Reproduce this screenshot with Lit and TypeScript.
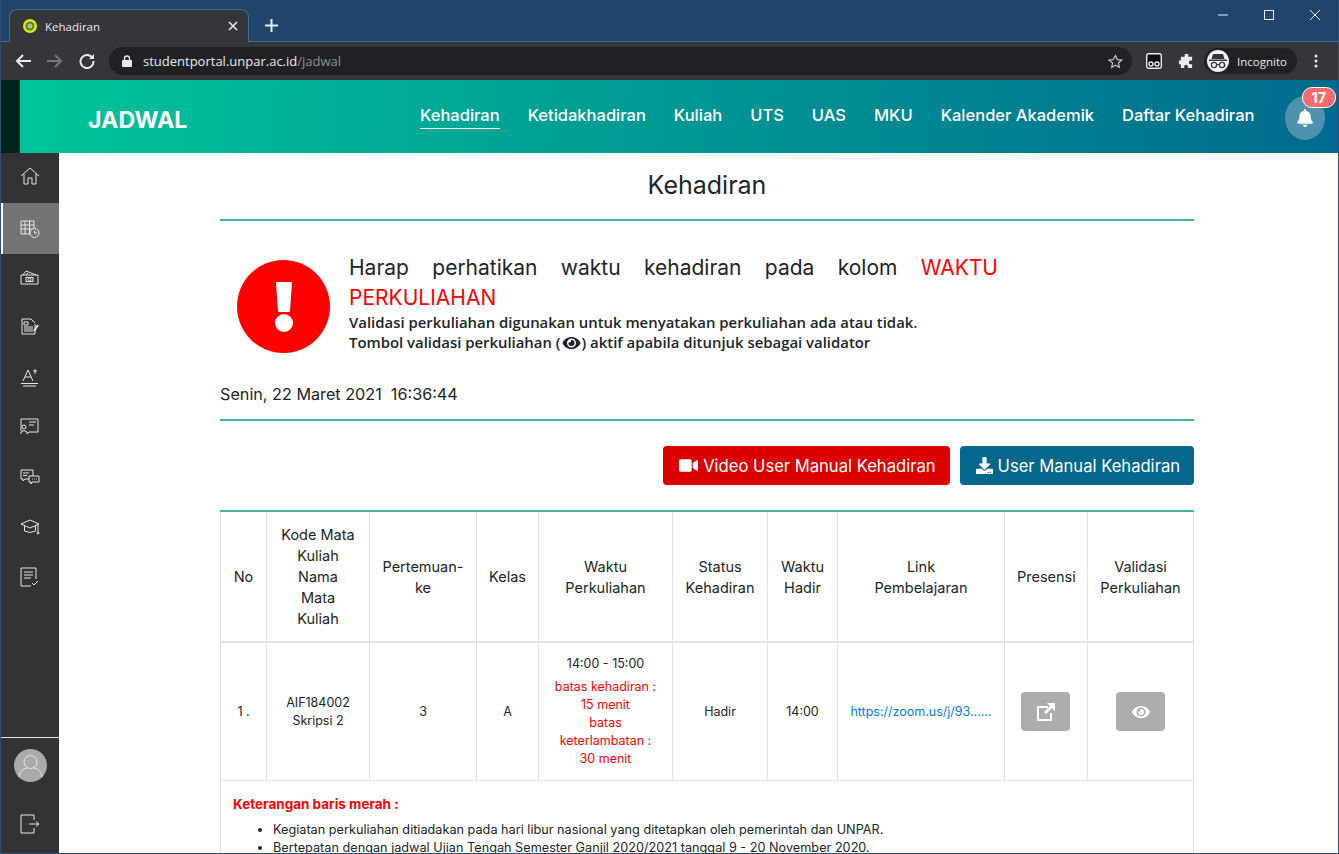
import { LitElement, css, html, svg } from "lit";
import { customElement } from "lit/decorators.js";

const NAV = ["Kehadiran", "Ketidakhadiran", "Kuliah", "UTS", "UAS", "MKU", "Kalender Akademik", "Daftar Kehadiran"];

const EYE = "M572.52 241.4C518.29 135.59 410.93 64 288 64S57.68 135.64 3.48 241.41a32.35 32.35 0 0 0 0 29.19C57.71 376.41 165.07 448 288 448s230.32-71.64 284.52-177.41a32.35 32.35 0 0 0 0-29.19zM288 400a144 144 0 1 1 144-144 143.93 143.93 0 0 1-144 144zm0-240a95.31 95.31 0 0 0-25.31 3.79 47.85 47.85 0 0 1-66.9 66.9A95.78 95.78 0 1 0 288 160z";
const BELL = "M224 512c35.32 0 63.97-28.65 63.97-64H160.03c0 35.35 28.65 64 63.97 64zm215.39-149.71c-19.32-20.76-55.47-51.99-55.47-154.29 0-77.7-54.48-139.9-127.94-155.16V32c0-17.67-14.32-32-31.98-32s-31.98 14.33-31.98 32v20.84C118.56 68.1 64.08 130.3 64.08 208c0 102.3-36.15 133.53-55.47 154.29-6 6.45-8.66 14.16-8.61 21.71.11 16.4 12.98 32 32.1 32h383.8c19.12 0 32-15.6 32.1-32 .05-7.55-2.61-15.27-8.61-21.71z";
const VIDEO = "M336.2 64H47.8C21.4 64 0 85.4 0 111.8v288.4C0 426.6 21.4 448 47.8 448h288.4c26.4 0 47.8-21.4 47.8-47.8V111.8c0-26.4-21.4-47.8-47.8-47.8zm189.4 37.7L416 177.3v157.4l109.6 75.5c21.2 14.6 50.4-.3 50.4-25.8V127.5c0-25.4-29.1-40.4-50.4-25.8z";
const DOWNLOAD = "M216 0h80c13.3 0 24 10.7 24 24v168h87.7c17.8 0 26.7 21.5 14.1 34.1L269.7 378.3c-7.5 7.5-19.8 7.5-27.3 0L90.1 226.1c-12.6-12.6-3.7-34.1 14.1-34.1H192V24c0-13.3 10.7-24 24-24zm296 376v112c0 13.3-10.7 24-24 24H24c-13.3 0-24-10.7-24-24V376c0-13.3 10.7-24 24-24h146.7l49 49c20.1 20.1 52.5 20.1 72.6 0l49-49H488c13.3 0 24 10.7 24 24zm-124 88c0-11-9-20-20-20s-20 9-20 20 9 20 20 20 20-9 20-20zm64 0c0-11-9-20-20-20s-20 9-20 20 9 20 20 20 20-9 20-20z";

// sidebar icons, 20x20 outlines
const SIDE = [
  svg`<path d="M1 10 10 2l9 8M4 8v10h4v-6h4v6h4V8"/>`,
  svg`<path d="M1 2h13v13H1zM1 6h13M1 10h13M5 2v13M9.500 2v13"/><circle cx="14.500" cy="14" r="4.500" fill="#737373"/><path d="M14.500 11.500V14h2.500"/>`,
  svg`<path d="M1 8h17v9H1zM3 8l3-4 10 4M6 8l2-2"/><rect x="6" y="10.500" width="7" height="4"/><circle cx="9.500" cy="12.500" r="1.500"/>`,
  svg`<path d="M15 7V17H2V2h9l4 4M4 5h4v3H4zM4 10h9M4 12h9M4 14h9"/><path d="M14 14l4-6" stroke-width="2"/>`,
  svg`<path d="M3 14 8 3l5 11M5 10h6M1 16.500h17M3 19h13M15 2v5M13 4h4"/>`,
  svg`<path d="M1 14V2h17v13H9l-2 2M9 5h7M9 8h5"/><circle cx="4" cy="10" r="2"/><path d="M1 17v-2q3-3 6 0v2"/>`,
  svg`<path d="M1 3h12v9H5l-2 2v-2H1zM3 6h6M3 8.500h4"/><path d="M9 9h10v6h-7l-1 2v-2H9z" fill="#333"/><path d="M12 12h.8M14 12h.8M16 12h.8"/>`,
  svg`<path d="M1 7l9-4 9 4-9 4zM4.500 9v5q5.500 3 11 0V9M18 8v7"/><circle cx="18" cy="16" r="1"/>`,
  svg`<path d="M16 12V1H1v18h10M4 5h9M4 8h9M4 11h7M12 16l2 2 4-4"/>`,
];

const COLS = [46, 103, 107, 62, 134, 95, 70, 167, 83, 106];

@customElement("app-root")
export class AppRoot extends LitElement {
  static styles = css`
    :host {
      height: 854px;
      overflow: hidden;
      background: #20456c;
      border-left: 1px solid #2a5078;
      border-right: 1px solid #2a5078;
      border-bottom: 1px solid #2a5078;
      box-sizing: border-box;
      font-family: "Inter", "Liberation Sans", sans-serif;
      color: #212529;
      display: flex;
      flex-direction: column;
    }
    .tabstrip {
      height: 42px;
      flex: none;
      display: flex;
      align-items: flex-end;
      padding-left: 8px;
      border-bottom: 1px solid #4a6a8c;
      box-sizing: border-box;
      position: relative;
    }
    .tab {
      width: 240px;
      height: 33px;
      background: #35363a;
      border: 1px solid #4a6a8c;
      border-bottom: none;
      border-radius: 8px 8px 0 0;
      box-sizing: border-box;
      display: flex;
      align-items: center;
      padding: 0 10px 0 12px;
      gap: 7px;
      color: #e8eaed;
      font: 11.500px "Open Sans", sans-serif;
      margin-bottom: -1px;
    }
    .tab span { flex: 1; }
    .plus { margin: 0 0 9px 16px; }
    .winctl {
      position: absolute;
      top: 10px;
      right: 18px;
      display: flex;
      gap: 36px;
    }
    .toolbar {
      height: 38px;
      flex: none;
      background: #35363a;
      display: flex;
      align-items: center;
      padding: 0 14px 0 6px;
      box-sizing: border-box;
    }
    .tbtn { width: 32px; display: flex; justify-content: center; }
    .omni {
      margin-left: 6px;
      width: 1023px;
      height: 28px;
      border-radius: 14px;
      background: #202124;
      display: flex;
      align-items: center;
      padding: 0 9px 0 13px;
      box-sizing: border-box;
      gap: 11px;
      color: #e8eaed;
      font: 13px "Open Sans", sans-serif;
    }
    .omni .url { flex: 1; }
    .omni .url i { font-style: normal; color: #8f9194; }
    .right { display: flex; align-items: center; margin-left: 14px; flex: 1; }
    .ext { margin-left: 17px; }
    .incog {
      margin-left: 10px;
      width: 93px;
      height: 26px;
      border-radius: 13px;
      background: #202124;
      display: flex;
      align-items: center;
      gap: 8px;
      padding-left: 3px;
      box-sizing: border-box;
      color: #e8eaed;
      font: 11.500px "Open Sans", sans-serif;
    }
    .incog b {
      width: 22px;
      height: 22px;
      border-radius: 50%;
      background: #f1f3f4;
      display: flex;
      align-items: center;
      justify-content: center;
    }
    .dots { margin-left: auto; margin-right: 6px; display: flex; }
    .head {
      height: 73px;
      flex: none;
      background: #00231b;
      padding-left: 19px;
      display: flex;
    }
    .bar {
      flex: 1;
      background: linear-gradient(96deg, #00c59a 0%, #006a8e 100%);
      display: flex;
      align-items: center;
      padding-left: 68px;
      position: relative;
      color: #fff;
    }
    .bar h1 { margin: 0; padding-top: 6px; font-size: 23.200px; font-weight: 700; width: 332px; }
    .bar nav { display: flex; gap: 28px; font-size: 16.500px; font-weight: 500; }
    .bar nav a { padding-bottom: 3px; border-bottom: 1px solid transparent; }
    .bar nav a.on { border-bottom-color: #fff; }
    .bell {
      position: absolute;
      right: 13px;
      top: 16px;
      width: 40px;
      height: 44px;
      border-radius: 50%;
      background: #4f92ad;
      display: flex;
      align-items: center;
      justify-content: center;
    }
    .badge {
      position: absolute;
      left: 17px;
      top: -9px;
      background: #f96a6e;
      border: 1px solid #fff;
      border-radius: 10px;
      color: #fff;
      font-size: 14.500px;
      font-weight: 700;
      padding: 0 8.500px;
      line-height: 19px;
    }
    .body { flex: 1; min-height: 0; display: flex; }
    .side {
      width: 58px;
      flex: none;
      background: #333;
      display: flex;
      flex-direction: column;
    }
    .side a {
      height: 50px;
      flex: none;
      display: flex;
      align-items: center;
      justify-content: center;
    }
    .side a:first-child { height: 46px; margin-bottom: 4px; }
    .side a.on { height: 51px; background: #737373; border-left: 2px solid #fff; padding-right: 2px; }
    .side a.on + a { margin-top: -2px; }
    .side svg { fill: none; stroke: #e6e6e6; stroke-width: 1; }
    .side .grow { flex: 1; }
    .side .acct { border-top: 1px solid #e6e6e6; height: 115px; flex: none; display: flex; flex-direction: column; align-items: center; }
    .avatar { margin: 11px 0 32px; }
    main { flex: 1; background: #fff; min-width: 0; overflow: hidden; padding: 0 144px 0 161px; }
    h2 { margin: 0; text-align: center; font-size: 25px; font-weight: 400; line-height: 64px; height: 66px; border-bottom: 2px solid #3fb5a3; }
    .alert { display: flex; align-items: flex-start; gap: 19px; padding: 31px 196px 0 17px; }
    .big { flex: none; margin-top: 8px; }
    .lead { font-size: 21px; line-height: 30px; text-align: justify; padding-top: 1px; margin-bottom: -1px; }
    .lead em { font-style: normal; color: #f00; }
    .sub { font: 600 14.900px/20px "Open Sans", sans-serif; color: #212529; }
    .sub svg { vertical-align: -3px; }
    .date { font-size: 16.200px; margin-top: 29px; height: 37px; border-bottom: 2px solid #3fb5a3; line-height: 24px; }
    .btns { display: flex; justify-content: flex-end; gap: 10px; margin: 25px 0; }
    .btns a {
      height: 39px;
      display: flex;
      align-items: center;
      gap: 5px;
      padding: 0 14px 0 16px;
      border-radius: 4px;
      color: #fff;
      font-size: 16.600px;
    }
    .btns a.red { background: #dc0000; }
    .btns a.blue { background: #05678c; }
    .btns svg { fill: #fff; }
    table { border-collapse: collapse; table-layout: fixed; width: 974px; border-top: 2px solid #3fb5a3; }
    th, td { border: 1px solid #dee2e6; text-align: center; vertical-align: middle; padding: 12px; }
    th { font-size: 14.500px; font-weight: 400; line-height: 21px; border-bottom-width: 2px; border-top: 0; height: 129px; box-sizing: border-box; }
    td { font-size: 12.500px; line-height: 18px; height: 138px; box-sizing: border-box; }
    td.time { padding: 12px 8px; }
    td.time p { margin: 0 0 5px; }
    .warn { color: #f00; }
    td.link { color: #007bff; white-space: nowrap; padding: 12px; }
    .act {
      width: 49px;
      height: 39px;
      border-radius: 4px;
      background: #adadad;
      margin: auto;
      display: flex;
      align-items: center;
      justify-content: center;
    }
    .act.pres { margin: 0 0 0 4px; }
    .act svg { fill: #fff; }
    .note { padding: 13px 12px; font-size: 12.700px; text-align: left; height: 90px; }
    .note b { display: block; color: #f00; font-size: 13.500px; margin-bottom: 8px; }
    .note ul { margin: 0; padding-left: 40px; line-height: 18px; }
  `;

  render() {
    return html`
      <div class="tabstrip">
        <div class="tab">
          <svg width="16" height="16" viewBox="0 0 16 16"><circle cx="8" cy="8" r="7" fill="#e6e600"/><circle cx="8" cy="8" r="4.500" fill="#2f8f4e"/><circle cx="8" cy="8" r="2.500" fill="#c9b97a"/></svg>
          <span>Kehadiran</span>
          <svg width="10" height="10" viewBox="0 0 10 10" stroke="#e8eaed" stroke-width="1.600"><path d="M1 1l8 8M9 1l-8 8"/></svg>
        </div>
        <svg class="plus" width="13" height="13" viewBox="0 0 13 13" stroke="#e8eaed" stroke-width="2"><path d="M6.500 0v13M0 6.500h13"/></svg>
        <div class="winctl">
          <svg width="10" height="10" viewBox="0 0 10 10" stroke="#e8eaed"><path d="M0 5h10"/></svg>
          <svg width="10" height="10" viewBox="0 0 10 10" stroke="#e8eaed" fill="none"><rect x=".5" y=".5" width="9" height="9"/></svg>
          <svg width="10" height="10" viewBox="0 0 10 10" stroke="#e8eaed"><path d="M0 0l10 10M10 0L0 10"/></svg>
        </div>
      </div>
      <div class="toolbar">
        <span class="tbtn"><svg width="16" height="14" viewBox="0 0 16 14" fill="none" stroke="#e8eaed" stroke-width="2"><path d="M16 7H2M8 1 2 7l6 6"/></svg></span>
        <span class="tbtn"><svg width="16" height="14" viewBox="0 0 16 14" fill="none" stroke="#75777a" stroke-width="2"><path d="M0 7h14M8 1l6 6-6 6"/></svg></span>
        <span class="tbtn"><svg width="16" height="16" viewBox="0 0 16 16" fill="none" stroke="#e8eaed" stroke-width="2"><path d="M13.500 5A6.500 6.500 0 1 0 14.500 8"/><path d="M15 1v5h-5" fill="#e8eaed" stroke="none"/></svg></span>
        <div class="omni">
          <svg width="10" height="12" viewBox="0 0 10 12"><rect y="5" width="10" height="7" rx="1" fill="#e8eaed"/><path d="M2.500 5V3.500a2.500 2.500 0 0 1 5 0V5" fill="none" stroke="#e8eaed" stroke-width="1.300"/></svg>
          <span class="url">studentportal.unpar.ac.id<i>/jadwal</i></span>
          <svg width="15" height="15" viewBox="0 0 24 24" fill="none" stroke="#bdc1c6" stroke-width="2"><path d="M12 2.500l2.900 6.400 7 .8-5.200 4.700 1.400 6.900-6.100-3.500-6.100 3.500 1.400-6.900L1.100 9.700l7-.8z"/></svg>
        </div>
        <div class="right">
          <svg width="16" height="16" viewBox="0 0 16 16" fill="#111" stroke="#e8eaed" stroke-width="1.400"><rect x=".7" y=".7" width="14.600" height="14.600" rx="2"/><circle cx="5" cy="11" r="2"/><circle cx="11" cy="11" r="2"/></svg>
          <svg class="ext" width="15" height="15" viewBox="0 0 16 16" fill="#e8eaed"><path d="M6 1.500a2 2 0 0 1 4 0V3h4v4h-1.500a2 2 0 0 0 0 4H14v4H9.500v-1.500a2 2 0 0 0-4 0V15H2v-4H.5a2 2 0 0 1 0-4H2V3h4z"/></svg>
          <div class="incog">
            <b><svg width="18" height="16" viewBox="0 0 18 16" fill="#35363a"><path d="M4 1h10l1.500 5h-13zM0 6.500h18V8H0z"/><circle cx="5" cy="12" r="2.600" fill="none" stroke="#35363a" stroke-width="1.300"/><circle cx="13" cy="12" r="2.600" fill="none" stroke="#35363a" stroke-width="1.300"/><path d="M7.500 11.500h3" stroke="#35363a"/></svg></b>
            Incognito
          </div>
          <span class="dots"><svg width="4" height="14" viewBox="0 0 4 14" fill="#e8eaed"><circle cx="2" cy="2" r="1.500"/><circle cx="2" cy="7" r="1.500"/><circle cx="2" cy="12" r="1.500"/></svg></span>
        </div>
      </div>
      <div class="head">
        <div class="bar">
          <h1>JADWAL</h1>
          <nav>${NAV.map((n, i) => html`<a class=${i === 0 ? "on" : ""}>${n}</a>`)}</nav>
          <div class="bell">
            <svg width="16" height="18" viewBox="0 0 448 512" fill="#fff"><path d=${BELL}/></svg>
            <span class="badge">17</span>
          </div>
        </div>
      </div>
      <div class="body">
        <div class="side">
          ${SIDE.map((p, i) => html`<a class=${i === 1 ? "on" : ""}><svg width="20" height="20" viewBox="0 0 20 20">${p}</svg></a>`)}
          <div class="grow"></div>
          <div class="acct">
            <svg class="avatar" width="33" height="33" viewBox="0 0 33 33"><circle cx="16.500" cy="16.500" r="16.500" fill="#aaa" stroke="none"/><circle cx="16.500" cy="13" r="6.500"/><path d="M5 28q1-8 8-9M28 28q-1-8-8-9"/></svg>
            <svg width="20" height="20" viewBox="0 0 20 20"><path d="M14 6V1H1v18h13v-5M9 10h10M16 7.500l3 2.500-3 2.500"/></svg>
          </div>
        </div>
        <main>
          <h2>Kehadiran</h2>
          <div class="alert">
            <svg class="big" width="93" height="93" viewBox="0 0 93 93"><circle cx="46.500" cy="46.500" r="46.500" fill="#f00"/><path d="M40 23h14l-2 28H42z" fill="#fff" stroke="#fff" stroke-width="2" stroke-linejoin="round"/><circle cx="47" cy="63" r="9" fill="#fff"/></svg>
            <div>
              <div class="lead">Harap perhatikan waktu kehadiran pada kolom <em>WAKTU PERKULIAHAN</em></div>
              <div class="sub">Validasi perkuliahan digunakan untuk menyatakan perkuliahan ada atau tidak.<br>Tombol validasi perkuliahan (<svg width="21" height="16" viewBox="0 0 576 512" fill="#212529"><path d=${EYE}/></svg>) aktif apabila ditunjuk sebagai validator</div>
            </div>
          </div>
          <div class="date">Senin, 22 Maret 2021&nbsp; 16:36:44</div>
          <div class="btns">
            <a class="red"><svg width="19" height="17" viewBox="0 0 576 512"><path d=${VIDEO}/></svg>Video User Manual Kehadiran</a>
            <a class="blue"><svg width="17" height="17" viewBox="0 0 512 512"><path d=${DOWNLOAD}/></svg>User Manual Kehadiran</a>
          </div>
          <table>
            <colgroup>${COLS.map((w) => html`<col style="width:${w}px">`)}</colgroup>
            <tr>
              <th>No</th><th>Kode Mata Kuliah Nama Mata Kuliah</th><th>Pertemuan-ke</th><th>Kelas</th><th>Waktu Perkuliahan</th><th>Status Kehadiran</th><th>Waktu Hadir</th><th>Link<br>Pembelajaran</th><th>Presensi</th><th>Validasi Perkuliahan</th>
            </tr>
            <tr>
              <td>1 .</td>
              <td>AIF184002<br>Skripsi 2</td>
              <td>3</td>
              <td>A</td>
              <td class="time"><p>14:00 - 15:00</p><span class="warn">batas kehadiran :<br>15 menit<br>batas keterlambatan :<br>30 menit</span></td>
              <td>Hadir</td>
              <td>14:00</td>
              <td class="link">https://zoom.us/j/93......</td>
              <td><div class="act pres"><svg width="20" height="20" viewBox="0 0 20 20"><path d="M1 4h11v2H3v11h11v-6h2v8H1zM11 1h8v8l-3-3-6 6-2-2 6-6z"/></svg></div></td>
              <td><div class="act"><svg width="20" height="16" viewBox="0 0 576 512"><path d=${EYE}/></svg></div></td>
            </tr>
            <tr>
              <td colspan="10" class="note">
                <b>Keterangan baris merah :</b>
                <ul>
                  <li>Kegiatan perkuliahan ditiadakan pada hari libur nasional yang ditetapkan oleh pemerintah dan UNPAR.</li>
                  <li>Bertepatan dengan jadwal Ujian Tengah Semester Ganjil 2020/2021 tanggal 9 - 20 November 2020.</li>
                </ul>
              </td>
            </tr>
          </table>
        </main>
      </div>
    `;
  }
}
